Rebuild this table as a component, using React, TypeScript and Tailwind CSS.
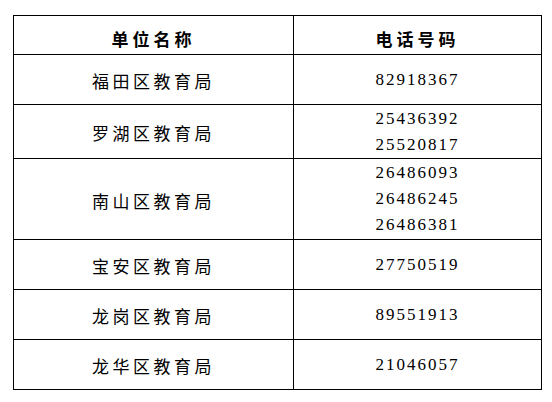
const rows = [
  { name: "福田区教育局", phones: ["82918367"], h: "h-[50px]" },
  { name: "罗湖区教育局", phones: ["25436392", "25520817"], h: "h-[54px]" },
  { name: "南山区教育局", phones: ["26486093", "26486245", "26486381"], h: "h-[81px]" },
  { name: "宝安区教育局", phones: ["27750519"], h: "h-[50px]" },
  { name: "龙岗区教育局", phones: ["89551913"], h: "h-[50px]" },
  { name: "龙华区教育局", phones: ["21046057"], h: "h-[49px]" },
];

const cjk = "font-['Noto_Sans_CJK_SC',sans-serif]";
const digits = "font-['Liberation_Serif','Noto_Sans_CJK_SC',serif]";

export default function App() {
  return (
    <div className="w-[552px] h-[402px] bg-white pt-[15px] pl-[13px]">
      <div className="w-[529px] border-[1.5px] border-black text-black">
        <div className="flex h-[39px] border-b-[1.5px] border-black">
          <div className={`w-[280px] flex items-center justify-center pt-[8px] border-r-[1.5px] border-black text-[17px] font-bold tracking-[4px] ${cjk}`}>
            单位名称
          </div>
          <div className={`flex-1 flex items-center justify-center pt-[8px] text-[17px] font-bold tracking-[4px] ${cjk}`}>
            电话号码
          </div>
        </div>
        {rows.map((r, i) => (
          <div key={r.name} className={`flex ${r.h} ${i < rows.length - 1 ? "border-b-[1.5px] border-black" : ""}`}>
            <div className={`w-[280px] flex items-center justify-center pt-[3px] border-r-[1.5px] border-black text-[17px] tracking-[3.5px] ${cjk}`}>
              {r.name}
            </div>
            <div className={`flex-1 flex flex-col items-center justify-center text-[17px] leading-[26px] tracking-[2px] ${digits}`}>
              {r.phones.map((p) => (
                <span key={p}>{p}</span>
              ))}
            </div>
          </div>
        ))}
      </div>
    </div>
  );
}
